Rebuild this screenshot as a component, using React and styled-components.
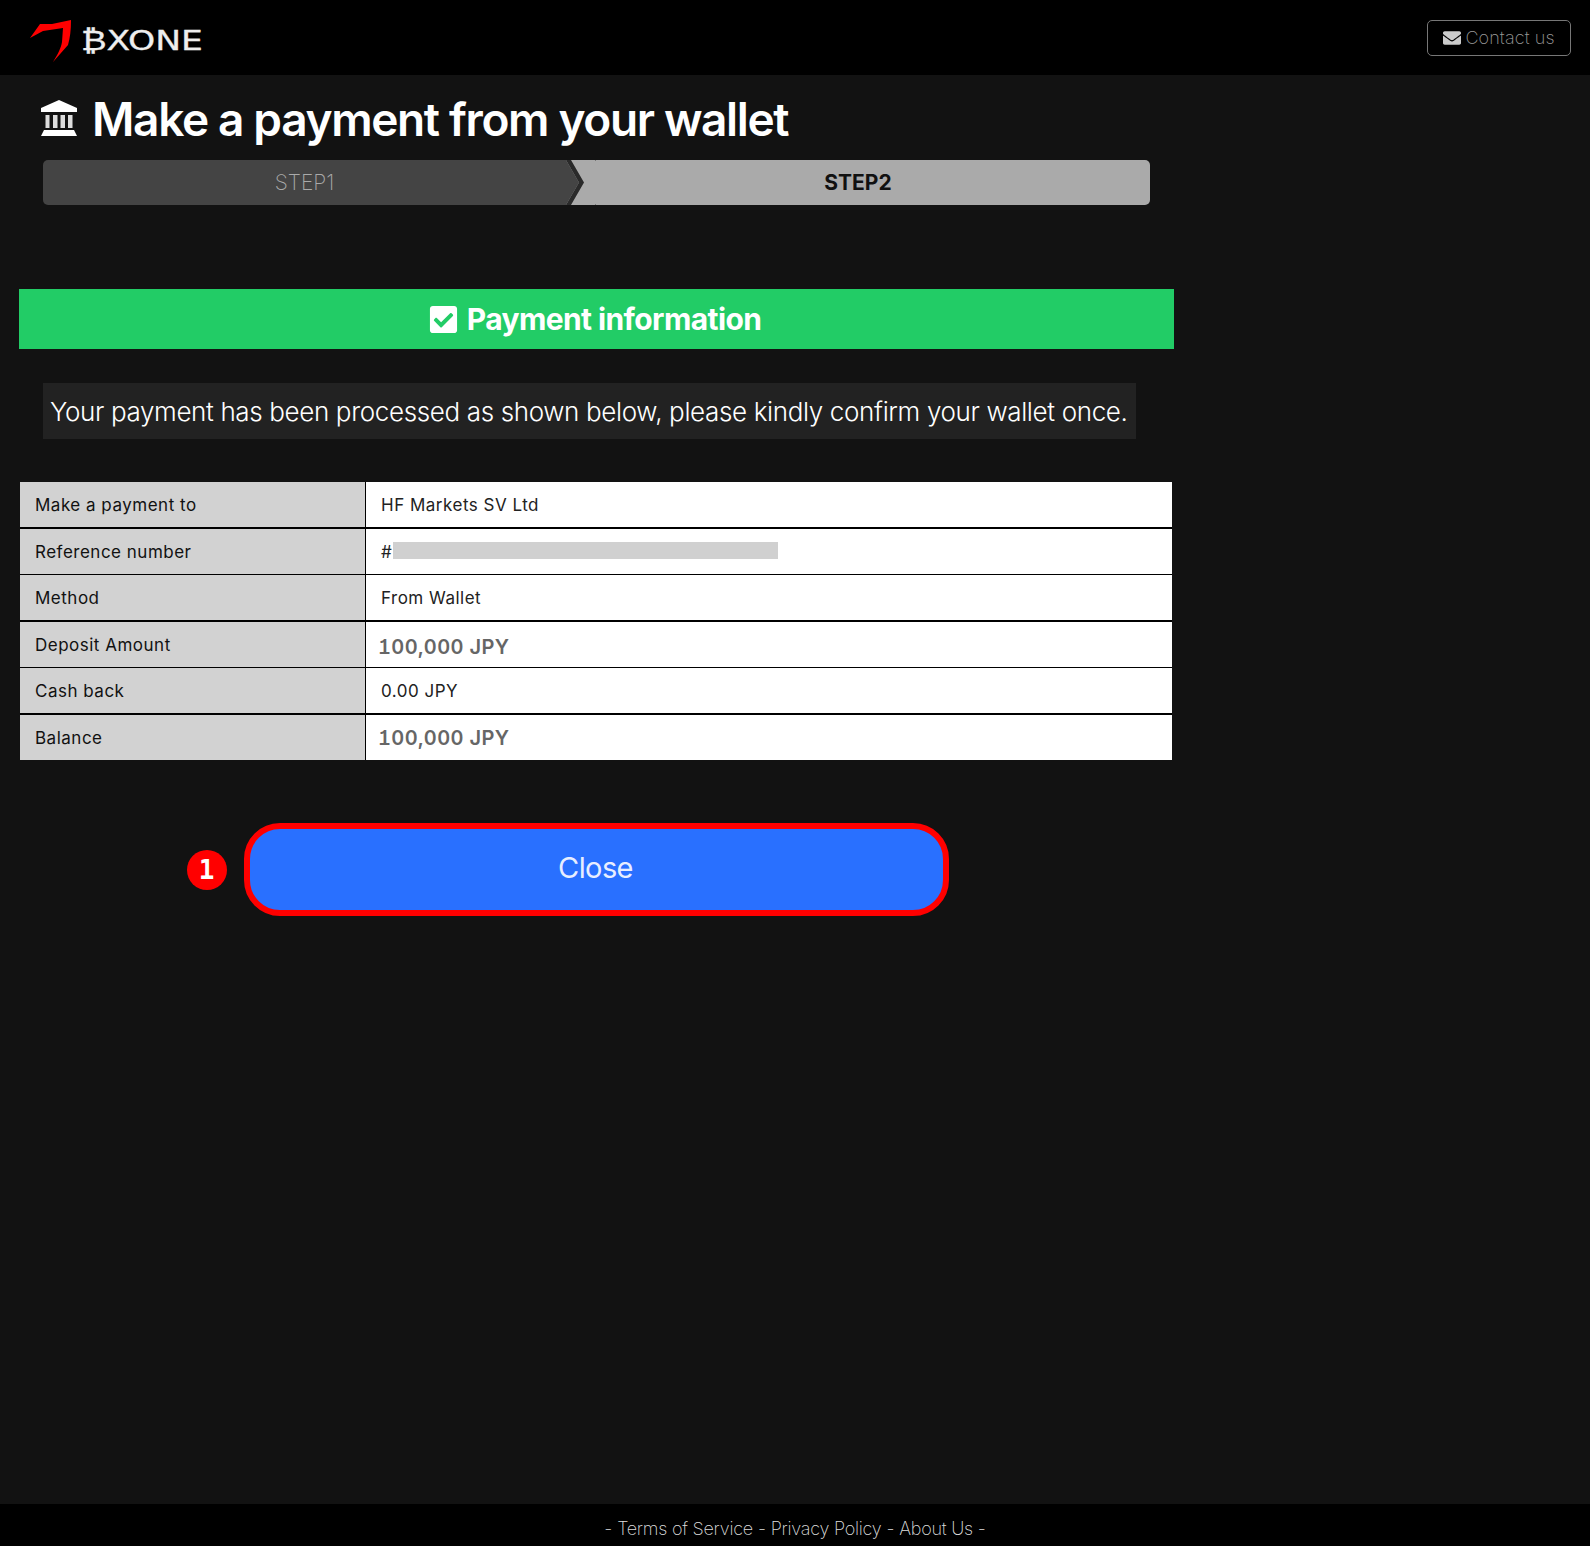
import React from "react";
import styled, { createGlobalStyle } from "styled-components";
import { FaEnvelope, FaCheckSquare } from "react-icons/fa";

const Global = createGlobalStyle`
  html, body { margin: 0; padding: 0; background: #121212; }
  body { font-family: Inter, "Liberation Sans", sans-serif; }
`;

const Page = styled.div`
  min-height: 1546px;
  display: flex;
  flex-direction: column;
`;

const Header = styled.header`
  height: 75px;
  background: #000;
  display: flex;
  align-items: center;
  justify-content: space-between;
  padding: 0 19px 0 30px;
`;

const Logo = styled.div`
  display: flex;
  align-items: center;
  gap: 9px;
  padding-top: 5px;
`;

const LogoMark = styled.svg`
  width: 42px;
  height: 42px;
  margin-top: 2px;
`;

const LogoText = styled.span`
  color: #eee;
  font-family: "DejaVu Sans", sans-serif;
  font-size: 27px;
  font-weight: 400;
  line-height: 1;
  -webkit-text-stroke: 0.3px #eee;
  transform: scaleX(1.28);
  transform-origin: left center;
`;

const ContactButton = styled.a`
  display: flex;
  align-items: center;
  justify-content: center;
  gap: 4px;
  box-sizing: border-box;
  width: 144px;
  height: 36px;
  border: 1px solid #777;
  border-radius: 5px;
  color: #999;
  font-size: 18px;
  font-weight: 200;
  letter-spacing: 0.1px;
  svg { color: #ccc; font-size: 18px; }
`;

const Main = styled.main`
  flex: 1;
  width: 1155px;
  margin-left: 19px;
`;

const TitleRow = styled.div`
  display: flex;
  align-items: center;
  gap: 15px;
  height: 85px;
  margin-left: 22px;
  color: #fff;
`;

const BankIcon = styled.svg`
  width: 36px;
  height: 36px;
  flex: none;
`;

const Title = styled.h1`
  margin: 0;
  padding-top: 2px;
  font-size: 46px;
  font-weight: 600;
  line-height: 1;
  letter-spacing: -1.35px;
`;

const Steps = styled.div`
  display: flex;
  margin: 0 24px;
  height: 45px;
  border-radius: 5px;
  overflow: hidden;
`;

const Step = styled.div`
  display: flex;
  align-items: center;
  justify-content: center;
  font-size: 21px;
  ${(p) =>
    p.$active
      ? `flex: 1; background: #aaa; color: #111; font-weight: 700; padding-right: 30px;`
      : `width: 523px; background: #444; color: #aaa; font-weight: 200;`}
`;

const StepArrow = styled.svg`
  flex: none;
  width: 30px;
  height: 45px;
  display: block;
`;

const Banner = styled.h2`
  margin: 84px 0 0;
  height: 60px;
  background: #22cc66;
  color: #fff;
  display: flex;
  align-items: center;
  justify-content: center;
  gap: 8px;
  font-size: 30px;
  font-weight: 700;
  letter-spacing: -0.6px;
  padding-right: 4px;
  svg { font-size: 31px; }
`;

const Message = styled.p`
  margin: 34px 38px 0 24px;
  height: 56px;
  background: #222;
  color: #fff;
  display: flex;
  align-items: center;
  padding-left: 7px;
  font-size: 26px;
  font-weight: 300;
  letter-spacing: -0.36px;
  white-space: nowrap;
`;

const InfoTable = styled.div`
  margin: 43px 2px 0 1px;
  display: grid;
  grid-template-columns: 345px 1fr;
  column-gap: 1px;
  background: #000;
`;

const Label = styled.div`
  height: 45px;
  background: #d2d2d2;
  color: #111;
  display: flex;
  align-items: center;
  padding-left: 15px;
  font-size: 17px;
  letter-spacing: 0.5px;
  margin-bottom: ${(p) => p.$gap}px;
`;

const Value = styled.div`
  height: 45px;
  background: #fff;
  color: #222;
  display: flex;
  align-items: center;
  padding-left: 15px;
  font-size: 17px;
  letter-spacing: 0.5px;
  margin-bottom: ${(p) => p.$gap}px;
`;

const Amount = styled.span`
  font-weight: 600;
  color: #666;
  font-size: 20px;
  font-feature-settings: "tnum", "cv01";
  letter-spacing: 0.4px;
  margin-left: -3px;
  padding-top: ${(p) => p.$drop}px;
`;

const Redacted = styled.span`
  display: inline-block;
  width: 385px;
  height: 17px;
  background: #d0d0d0;
  margin: 0 0 2px 1px;
`;

const ActionRow = styled.div`
  display: flex;
  align-items: center;
  margin: 63px 0 0 168px;
  gap: 17px;
`;

const Badge = styled.span`
  width: 40px;
  height: 40px;
  box-sizing: border-box;
  padding-right: 1px;
  border-radius: 50%;
  background: #ff0000;
  color: #fff;
  display: flex;
  align-items: center;
  justify-content: center;
  font-family: "DejaVu Sans Mono", monospace;
  font-weight: 700;
  font-size: 26px;
`;

const CloseButton = styled.button`
  box-sizing: border-box;
  width: 705px;
  height: 93px;
  padding: 0 2px 5px 0;
  border: 6px solid #ff0000;
  border-radius: 36px;
  background: #2970ff;
  color: #e8eeff;
  font-family: inherit;
  font-size: 29px;
  font-weight: 400;
  letter-spacing: -0.6px;
`;

const Footer = styled.footer`
  height: 42px;
  box-sizing: border-box;
  padding-top: 6px;
  background: #000;
  color: #ddd;
  display: flex;
  align-items: center;
  justify-content: center;
  font-size: 18px;
  font-weight: 200;
  letter-spacing: -0.25px;
  gap: 5px;
`;

const rows = [
  { l: "Make a payment to", v: "HF Markets SV Ltd", g: 2 },
  { l: "Reference number", v: "#", redacted: true, g: 1 },
  { l: "Method", v: "From Wallet", g: 2 },
  { l: "Deposit Amount", amount: "100,000 JPY", drop: 4, g: 1 },
  { l: "Cash back", v: "0.00 JPY", g: 2 },
  { l: "Balance", amount: "100,000 JPY", drop: 0, g: 0 },
];

export default function App() {
  return (
    <Page>
      <Global />
      <Header>
        <Logo>
          <LogoMark viewBox="0 0 42 42">
            <path fill="#f00" d="M0 18 L10 4 L22 4 L41 0 C41 10 40 18 38 25 L23 42 C28 34 31 28 32 22 L33 8 L13 11Z" />
          </LogoMark>
          <LogoText>₿XONE</LogoText>
        </Logo>
        <ContactButton>
          <FaEnvelope />
          Contact us
        </ContactButton>
      </Header>
      <Main>
        <TitleRow>
          <BankIcon viewBox="0 0 36 36" fill="#fff">
            <path d="M18 0 L36 8 V12 H0 V8Z" />
            <rect x="4.5" y="15" width="4" height="13" fill="#ddd" />
            <rect x="12" y="15" width="4.5" height="13" fill="#ddd" />
            <rect x="19.5" y="15" width="4.5" height="13" fill="#ddd" />
            <rect x="27" y="15" width="4.5" height="13" fill="#ddd" />
            <path d="M3 30 H33 L36 36 H0Z" />
          </BankIcon>
          <Title>Make a payment from your wallet</Title>
        </TitleRow>
        <Steps>
          <Step>STEP1</Step>
          <StepArrow viewBox="0 0 30 45">
            <rect width="30" height="45" fill="#aaa" />
            <path d="M0 0 L13 22.5 L0 45Z" fill="#444" />
            <path d="M0 0 L13 22.5 L0 45 H5 L18 22.5 L5 0Z" fill="#2a2a2a" />
            <rect x="29" y="0" width="1" height="1" fill="#777" />
            <rect x="29" y="44" width="1" height="1" fill="#777" />
          </StepArrow>
          <Step $active>STEP2</Step>
        </Steps>
        <Banner>
          <FaCheckSquare />
          Payment information
        </Banner>
        <Message>Your payment has been processed as shown below, please kindly confirm your wallet once.</Message>
        <InfoTable>
          {rows.map((r) => (
            <React.Fragment key={r.l}>
              <Label $gap={r.g}>{r.l}</Label>
              <Value $gap={r.g}>
                {r.amount ? <Amount $drop={r.drop}>{r.amount}</Amount> : r.v}
                {r.redacted && <Redacted />}
              </Value>
            </React.Fragment>
          ))}
        </InfoTable>
        <ActionRow>
          <Badge>1</Badge>
          <CloseButton>Close</CloseButton>
        </ActionRow>
      </Main>
      <Footer>
        <span>-</span><span>Terms of Service</span><span>-</span><span>Privacy Policy</span><span>-</span><span>About Us</span><span>-</span>
      </Footer>
    </Page>
  );
}
